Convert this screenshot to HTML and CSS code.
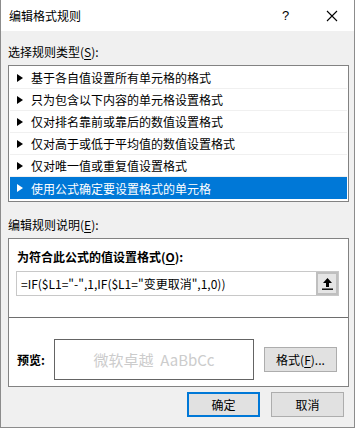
FILE: index.html
```html
<!DOCTYPE html>
<html lang="zh-CN">
<head>
    <meta charset="UTF-8">
    <title>编辑格式规则</title>
    <link rel="stylesheet" href="styles.css">
</head>
<body>
    <div class="dialog">
        <div class="titlebar">
            <span class="title">编辑格式规则</span>
            <span class="help">?</span>
            <span class="close">
                <svg width="12" height="12" viewBox="0 0 12 12"><path d="M1 1L11 11M11 1L1 11" stroke="#000" stroke-width="1.1"/></svg>
            </span>
        </div>

        <div class="content">
            <div class="label label-top">选择规则类型(<u>S</u>):</div>
            <ul class="rule-list">
                <li><span class="arrow"></span>基于各自值设置所有单元格的格式</li>
                <li><span class="arrow"></span>只为包含以下内容的单元格设置格式</li>
                <li><span class="arrow"></span>仅对排名靠前或靠后的数值设置格式</li>
                <li><span class="arrow"></span>仅对高于或低于平均值的数值设置格式</li>
                <li><span class="arrow"></span>仅对唯一值或重复值设置格式</li>
                <li class="selected"><span class="arrow"></span>使用公式确定要设置格式的单元格</li>
            </ul>

            <div class="label label-mid">编辑规则说明(<u>E</u>):</div>
            <div class="rule-box">
                <div class="bold-label">为符合此公式的值设置格式(<u>O</u>):</div>
                <div class="formula">
                    <span class="formula-text">=IF($L1="-",1,IF($L1="变更取消",1,0))</span>
                    <span class="collapse-btn">
                        <svg width="11" height="12" viewBox="0 0 11 12"><path d="M5.5 0L10 5H7V9H4V5H1Z" fill="#000"/><rect x="0" y="10.5" width="11" height="1.4" fill="#000"/></svg>
                    </span>
                </div>
                <div class="divider"></div>
                <div class="preview-row">
                    <span class="bold-label preview-label">预览:</span>
                    <div class="preview-box">微软卓越&nbsp;&nbsp;AaBbCc</div>
                    <button class="btn btn-format">格式(<u>F</u>)...</button>
                </div>
            </div>

            <div class="actions">
                <button class="btn btn-default">确定</button>
                <button class="btn">取消</button>
            </div>
        </div>
    </div>
</body>
</html>
```

FILE: styles.css
```css
body {
    margin: 0;
    background-color: #fff;
    font-family: "Noto Sans CJK SC", "Noto Sans", sans-serif;
    font-size: 12px;
    color: #000;
}
.dialog {
    box-sizing: border-box;
    width: 355px;
    height: 428px;
    border: 1px solid #8c8c8c;
    border-top: none;
    background-color: #f0f0f0;
    display: flex;
    flex-direction: column;
}
.titlebar {
    height: 31px;
    background-color: #fff;
    display: flex;
    align-items: center;
    padding-left: 8px;
}
.title {
    flex: 1;
    line-height: 16px;
}
.help {
    width: 14px;
    margin-right: 30px;
    font-family: "Liberation Sans", sans-serif;
    font-size: 13px;
}
.close {
    display: flex;
    margin-right: 16px;
}
.content {
    padding: 0 5px 0 7px;
}
u {
    text-decoration: underline;
    text-underline-offset: 2px;
}
.label {
    line-height: 16px;
}
.label-top {
    margin-top: 13px;
    margin-bottom: 5px;
}
.rule-list {
    list-style: none;
    margin: 0;
    padding: 1px 1px 2px;
    border: 1px solid #828282;
    background-color: #fff;
}
.rule-list li {
    height: 22px;
    box-sizing: border-box;
    border-bottom: 1px solid #f0f0f0;
    display: flex;
    align-items: center;
    padding-left: 7px;
}
.rule-list li.selected {
    background-color: #0078d7;
    color: #fff;
    border-bottom: none;
}
.arrow {
    width: 0;
    height: 0;
    border-left: 6px solid #000;
    border-top: 4px solid transparent;
    border-bottom: 4px solid transparent;
    margin-right: 8px;
}
.selected .arrow {
    border-left-color: #fff;
}
.label-mid {
    margin-top: 15px;
    margin-bottom: 5px;
}
.rule-box {
    height: 149px;
    box-sizing: border-box;
    border: 1px solid #828282;
    background-color: #fff;
    display: flex;
    flex-direction: column;
}
.bold-label {
    font-weight: bold;
    line-height: 16px;
}
.rule-box > .bold-label {
    margin: 10px 0 0 8px;
}
.formula {
    margin: 6px 9px 0 7px;
    height: 25px;
    box-sizing: border-box;
    border: 1px solid #c8c8c8;
    display: flex;
    align-items: center;
}
.formula-text {
    flex: 1;
    padding-left: 4px;
    line-height: 16px;
}
.collapse-btn {
    width: 22px;
    height: 23px;
    box-sizing: border-box;
    border: 2px solid #bfbfbf;
    background-color: #e5e5e5;
    display: flex;
    align-items: center;
    justify-content: center;
}
.divider {
    margin-top: 21px;
    height: 1px;
    background-color: #6e6e6e;
}
.preview-row {
    display: flex;
    align-items: center;
    margin-top: 21px;
    padding-left: 8px;
}
.preview-label {
    width: 37px;
}
.preview-box {
    width: 198px;
    height: 39px;
    border: 1px solid #646464;
    color: #cccccc;
    font-size: 15px;
    display: flex;
    align-items: center;
    justify-content: center;
}
.btn {
    box-sizing: border-box;
    width: 73px;
    height: 25px;
    padding: 0;
    border: 1px solid #adadad;
    background-color: #e1e1e1;
    font-family: inherit;
    font-size: 12px;
    color: #000;
}
.btn-format {
    margin-left: 10px;
}
.actions {
    display: flex;
    justify-content: flex-end;
    gap: 11px;
    margin-top: 5px;
    padding-right: 5px;
}
.btn-default {
    border: 2px solid #0078d7;
}
```
